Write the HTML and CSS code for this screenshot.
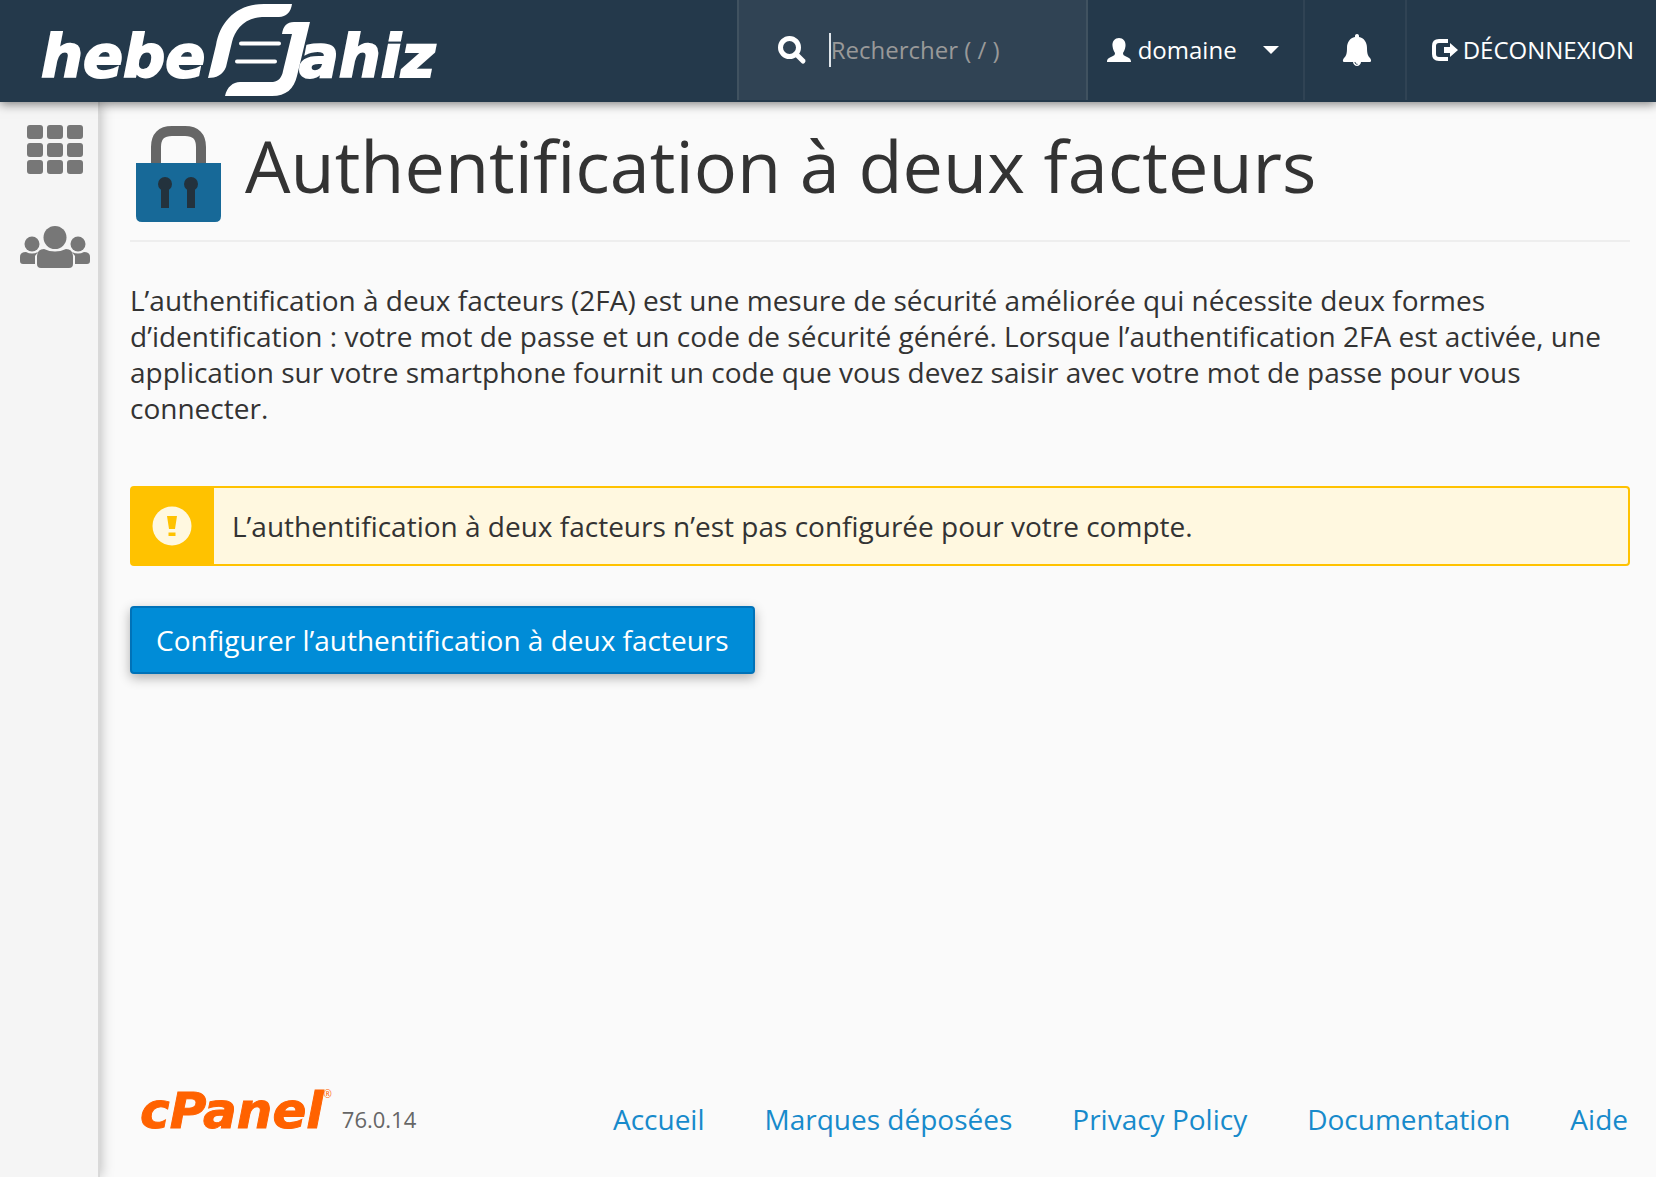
FILE: index.html
```html
<!DOCTYPE html>
<html lang="fr">
<head>
  <meta charset="UTF-8">
  <meta name="viewport" content="width=device-width, initial-scale=1.0">
  <title>Authentification à deux facteurs</title>
  <link rel="stylesheet" href="styles.css">
</head>
<body>
  <!-- TOP BAR -->
  <header class="navbar">
    <a class="brand" href="#">
      <svg width="460" height="100" viewBox="0 0 460 100" fill="#fff">
        <text class="brand-text" x="41" y="77">hebe</text>
        <path d="M208 78L216 45C220 22 236 4 264 4H292C291 12 286 17 279 17H262C244 18 235 30 232 42L226 67C223 75 216 78 208 78Z"/>
        <path d="M282 34C283 26 287 22 294 22H310L297 76C294 89 286 96 272 96H225C227 87 233 82 240 82H273C279 81 282 77 283 71L292 34Z"/>
        <path d="M241 43.500H279M237 61.500H275" stroke="#fff" stroke-width="4" stroke-linecap="round"/>
        <text class="brand-text" x="299" y="77">ahiz</text>
      </svg>
    </a>
    <form class="search">
      <svg width="30" height="30" viewBox="0 0 30 30" fill="none" stroke="#fff">
        <circle cx="12.500" cy="12.500" r="9" stroke-width="5"/>
        <path d="M19 19L26 26" stroke-width="5" stroke-linecap="round"/>
      </svg>
      <input class="search-input" type="text" aria-label="Rechercher" placeholder="Rechercher ( / )">
    </form>
    <button class="nav-item user" type="button">
      <svg width="26" height="26" viewBox="0 0 26 26" fill="#fff">
        <path d="M13 1C17 1 20 4 19.500 9C19 13 18 14 17 16C17 18 18 18.500 20 19.500C23 21 25 21.500 25 25H1C1 21.500 3 21 6 19.500C8 18.500 9 18 9 16C8 14 7 13 6.500 9C6 4 9 1 13 1Z"/>
      </svg>
      <span>domaine</span>
      <i class="caret"></i>
    </button>
    <button class="nav-item bell" type="button" aria-label="Notifications">
      <svg width="30" height="34" viewBox="0 0 30 34" fill="#fff">
        <path d="M15 1C16.500 1 17.200 2 17 4C22 5 25 9 25 15C25 21 26 23 28 25C29.500 27 29.500 29 27.500 29H19C19 31 17 33 15 33C13 33 11 31 11 29H2.500C.5 29 .5 27 2 25C4 23 5 21 5 15C5 9 8 5 13 4C12.800 2 13.500 1 15 1Z"/>
        <path d="M13 29C13 30.500 14 31.300 15.500 31.300" fill="none" stroke="#24394b"/>
      </svg>
    </button>
    <a class="nav-item logout" href="#">
      <svg width="28" height="24" viewBox="0 0 28 24">
        <path d="M17 3H8C4.500 3 3 4.500 3 8V16C3 19.500 4.500 21 8 21H17" fill="none" stroke="#fff" stroke-width="4"/>
        <path d="M13 9H19V5L27 12L19 19V15H13Z" fill="#fff"/>
      </svg>
      <span>DÉCONNEXION</span>
    </a>
  </header>

  <div class="wrapper">
    <!-- SIDEBAR -->
    <nav class="sidebar">
      <a href="#" aria-label="Accueil">
        <svg width="70" height="50" viewBox="0 0 70 50" fill="#777">
          <rect x="7" width="16" height="14" rx="3"/><rect x="27" width="16" height="14" rx="3"/><rect x="47" width="16" height="14" rx="3"/>
          <rect x="7" y="18" width="16" height="14" rx="3"/><rect x="27" y="18" width="16" height="14" rx="3"/><rect x="47" y="18" width="16" height="14" rx="3"/>
          <rect x="7" y="35" width="16" height="14" rx="3"/><rect x="27" y="35" width="16" height="14" rx="3"/><rect x="47" y="35" width="16" height="14" rx="3"/>
        </svg>
      </a>
      <a href="#" aria-label="Utilisateurs">
        <svg width="70" height="42" viewBox="0 0 70 42" fill="#777">
          <circle cx="12" cy="18" r="7.500"/>
          <circle cx="58" cy="18" r="7.500"/>
          <path d="M6 26Q12 29 18 26L15 30V38H3Q0 38 0 35V31Q0 26 6 26Z"/>
          <path d="M64 26Q58 29 52 26L55 30V38H67Q70 38 70 35V31Q70 26 64 26Z"/>
          <circle cx="35" cy="11.500" r="11.500"/>
          <path d="M24 23Q35 28 46 23Q53 23 53 31V38Q53 42 49 42H21Q17 42 17 38V31Q17 23 24 23Z"/>
        </svg>
      </a>
    </nav>

    <!-- CONTENT -->
    <div class="content">
      <main>
        <div class="page-header">
          <svg width="96" height="96" viewBox="0 0 96 96">
            <path d="M26 38V21Q26 5 42 5H55Q71 5 71 21V38" fill="none" stroke="#666" stroke-width="10"/>
            <path d="M6 37H91V90Q91 96 85 96H12Q6 96 6 90Z" fill="#176998"/>
            <g fill="#23323d">
              <circle cx="35" cy="58" r="7"/><rect x="31" y="60" width="8" height="22"/>
              <circle cx="61" cy="58" r="7"/><rect x="57" y="60" width="8" height="22"/>
            </g>
          </svg>
          <h1>Authentification à deux facteurs</h1>
        </div>

        <p class="description">L’authentification à deux facteurs (2FA) est une mesure de sécurité améliorée qui nécessite deux formes d’identification : votre mot de passe et un code de sécurité généré. Lorsque l’authentification 2FA est activée, une application sur votre smartphone fournit un code que vous devez saisir avec votre mot de passe pour vous connecter.</p>

        <div class="alert">
          <div class="alert-icon">
            <svg width="40" height="40" viewBox="0 0 40 40">
              <circle cx="20" cy="20" r="19.500" fill="#fff8e0"/>
              <path d="M15 10H25L23 23H17ZM16.500 26.500H23.500V30H16.500Z" fill="#ffc200"/>
            </svg>
          </div>
          <div class="alert-message">L’authentification à deux facteurs n’est pas configurée pour votre compte.</div>
        </div>

        <button class="btn-primary" type="button">Configurer l’authentification à deux facteurs</button>
      </main>

      <footer class="footer">
        <div class="product">
          <span class="cpanel">cPanel<sup>®</sup></span>
          <span class="version">76.0.14</span>
        </div>
        <nav class="footer-links">
          <a href="#">Accueil</a>
          <a href="#">Marques déposées</a>
          <a href="#">Privacy Policy</a>
          <a href="#">Documentation</a>
          <a href="#">Aide</a>
        </nav>
      </footer>
    </div>
  </div>
</body>
</html>
```

FILE: styles.css
```css
* {
  box-sizing: border-box;
}

body {
  margin: 0;
  min-height: 100vh;
  display: flex;
  flex-direction: column;
  background: #fafafa;
  color: #333;
  font-family: "Open Sans", sans-serif;
  font-size: 28px;
  line-height: 36px;
}

svg {
  display: block;
  flex: none;
}

a {
  color: #178acb;
  text-decoration: none;
}

/* TOP BAR */
.navbar {
  position: relative;
  z-index: 2;
  display: flex;
  height: 102px;
  padding-bottom: 2px;
  background: #24394b;
  box-shadow: 0 2px 10px rgba(0, 0, 0, 0.5);
  font-size: 24px;
}
.brand {
  flex: 1;
}
.brand-text {
  font: italic bold 59px "DejaVu Sans", sans-serif;
  stroke: #fff;
  stroke-width: 2px;
}
.search {
  display: flex;
  align-items: center;
  gap: 22px;
  width: 351px;
  padding-left: 38px;
  background: #304354;
  border: solid #405260;
  border-width: 0 2px;
}
.search-input {
  flex: 1;
  min-width: 0;
  height: 34px;
  padding: 0;
  background: none;
  border: 0;
  border-left: 2px solid #dfe5ea;
  border-radius: 0;
  outline: none;
  color: #fff;
  font: inherit;
}
.search-input::placeholder {
  color: #999;
  opacity: 1;
}
.nav-item {
  display: flex;
  align-items: center;
  gap: 6px;
  padding: 0;
  background: none;
  border: 0;
  color: #fff;
  font: inherit;
}
.user {
  width: 217px;
  padding-left: 18px;
  border-right: 2px solid #304354;
}
.caret {
  margin-left: 20px;
  border: solid transparent;
  border-width: 8px 8px 0;
  border-top-color: #fff;
}
.bell {
  justify-content: center;
  width: 102px;
  padding-left: 4px;
  border-right: 2px solid #304354;
}
.logout {
  padding: 0 22px 0 24px;
  gap: 4px;
}

/* SIDEBAR */
.wrapper {
  flex: 1;
  display: flex;
}
.sidebar {
  display: flex;
  flex-direction: column;
  gap: 51px;
  width: 100px;
  padding: 23px 8px 0 20px;
  background: #f5f5f5;
  border-right: 2px solid #d9d9d9;
  box-shadow: 1px 0 12px rgba(0, 0, 0, 0.25);
}

/* CONTENT */
.content {
  flex: 1;
  display: flex;
  flex-direction: column;
  padding: 24px 26px 38px 30px;
}
.page-header {
  display: flex;
  gap: 19px;
  padding-bottom: 18px;
  border-bottom: 2px solid #eee;
}
h1 {
  margin: 0;
  font-size: 72px;
  font-weight: 400;
  line-height: 78px;
}
.description {
  margin: 40px 0 60px;
}
.alert {
  display: flex;
  margin-bottom: 40px;
  background: #fff8e0;
  border: 2px solid #ffc200;
  border-radius: 4px;
}
.alert-icon {
  display: flex;
  align-items: center;
  justify-content: center;
  width: 82px;
  padding-right: 2px;
  background: #ffc200;
}
.alert-message {
  padding: 20px 18px;
}
.btn-primary {
  padding: 14px 24px;
  background: #008cd7;
  border: 2px solid #0072b8;
  border-radius: 4px;
  box-shadow: 0 4px 12px rgba(0, 0, 0, 0.3);
  color: #fff;
  font: inherit;
}

/* FOOTER */
.footer {
  display: flex;
  align-items: flex-end;
  justify-content: space-between;
  margin-top: auto;
  padding: 0 2px 0 10px;
  line-height: 40px;
}
.product {
  display: flex;
  align-items: baseline;
  gap: 10px;
}
.cpanel {
  color: #ff6200;
  font: italic bold 50px/44px "DejaVu Sans", sans-serif;
  -webkit-text-stroke: 1px #ff6200;
}
.cpanel sup {
  font: 10px/10px "Open Sans", sans-serif;
  vertical-align: 30px;
  -webkit-text-stroke: 0;
}
.version {
  color: #666;
  font-size: 22px;
}
.footer-links {
  display: flex;
  gap: 60px;
}
```
